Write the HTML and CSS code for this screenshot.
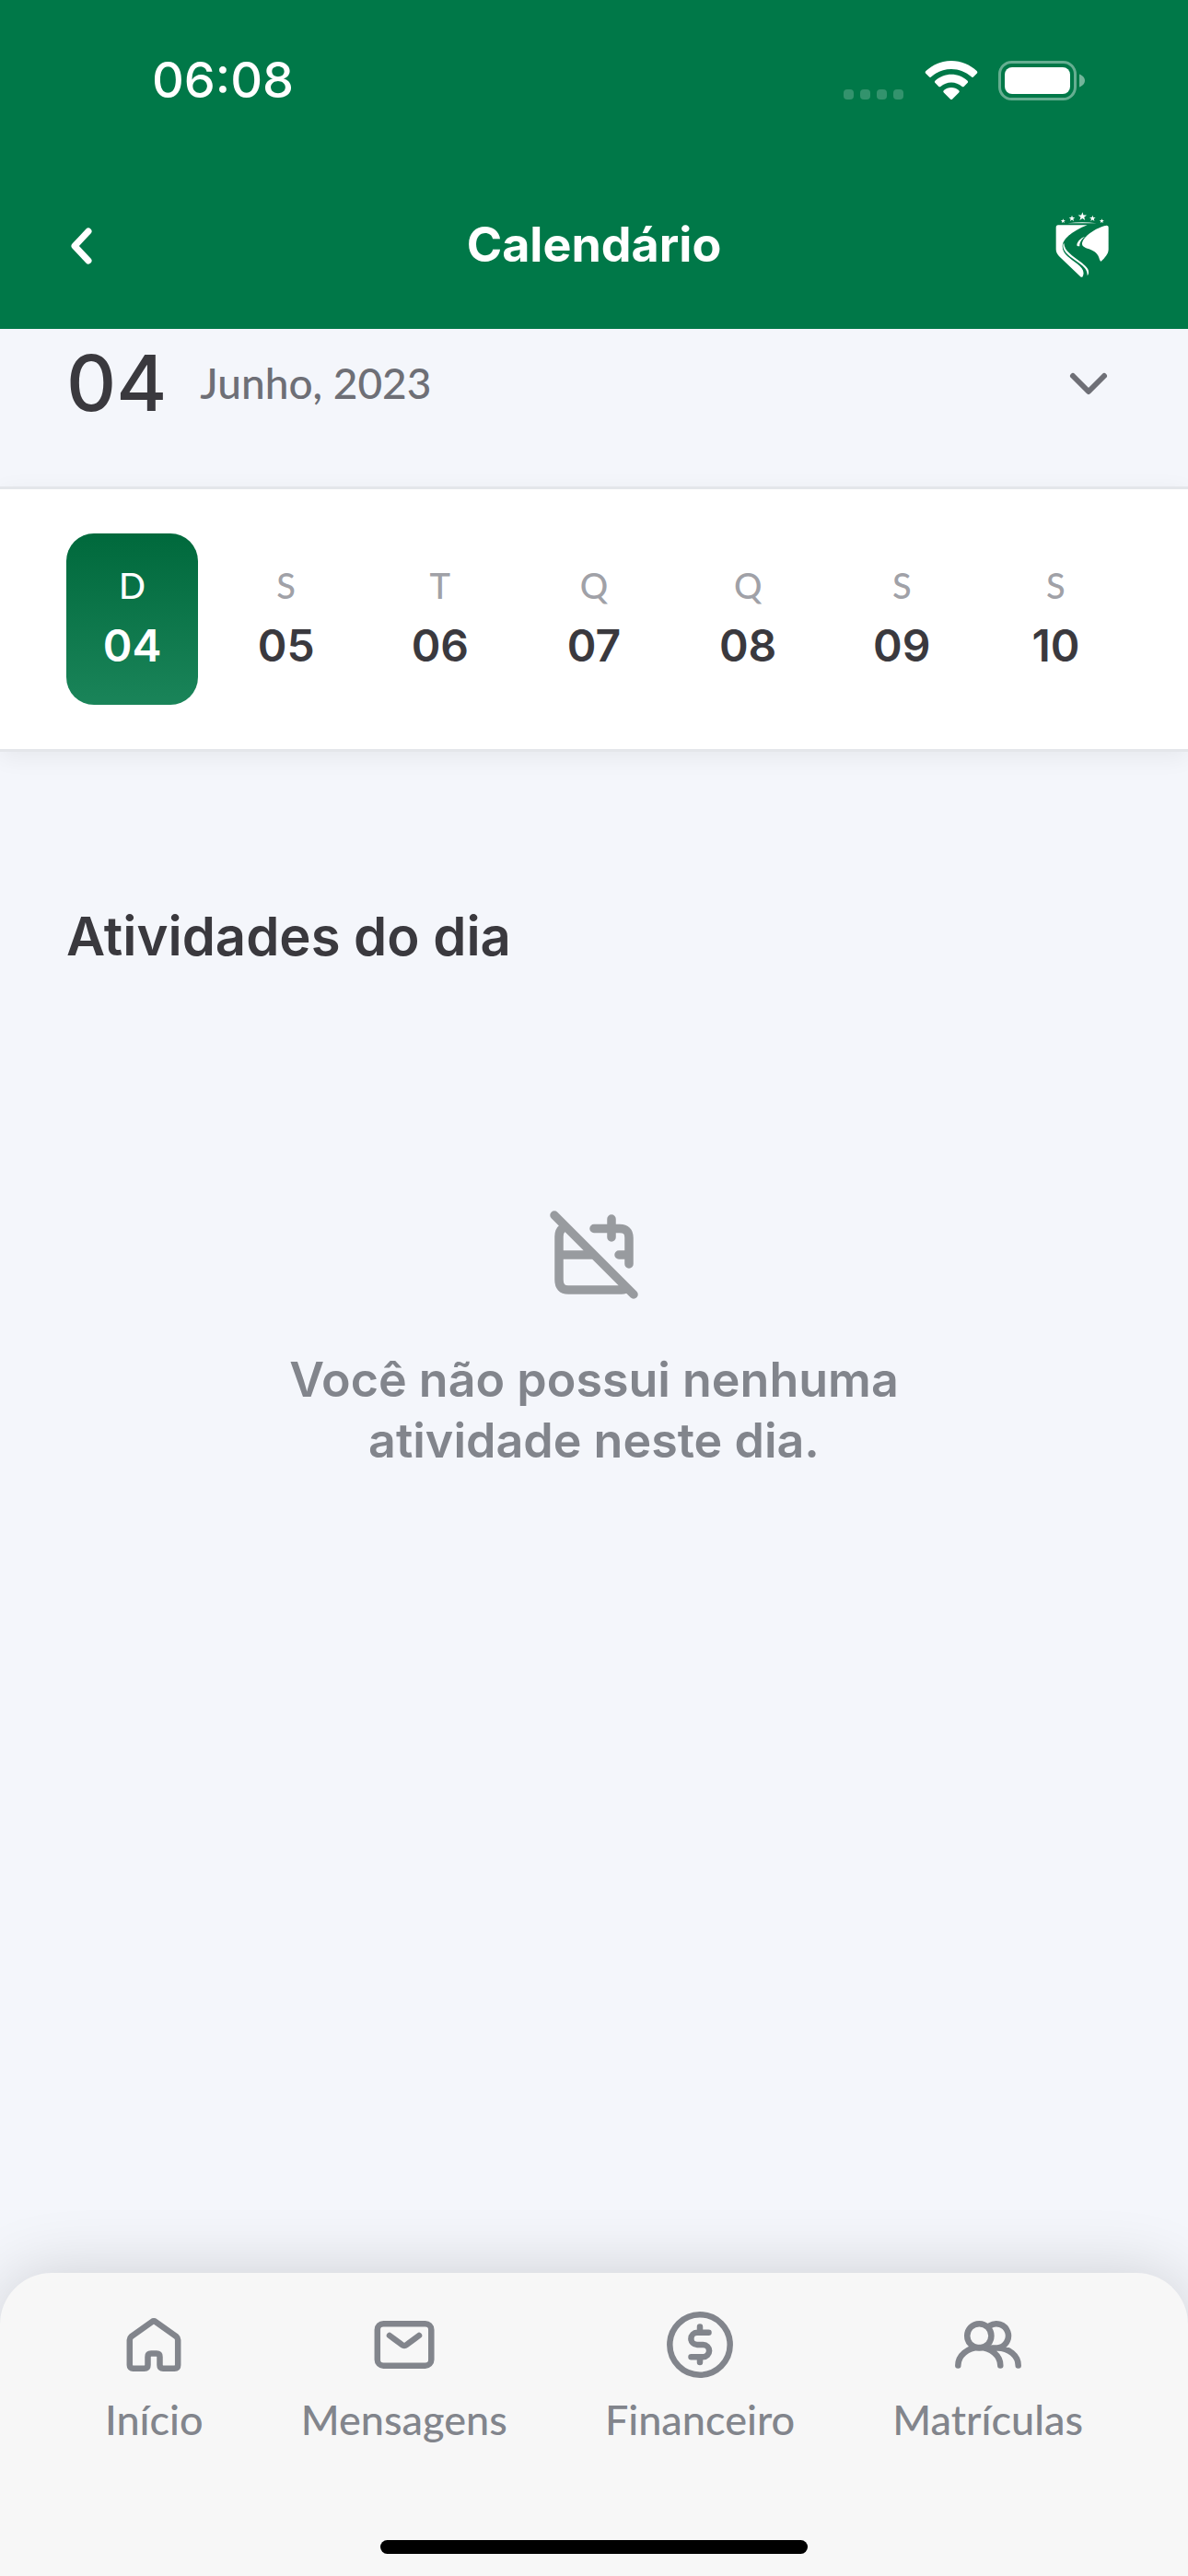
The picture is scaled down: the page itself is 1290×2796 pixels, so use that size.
FILE: index.html
```html
<!DOCTYPE html>
<html lang="pt-BR">
<head>
<meta charset="utf-8">
<meta name="viewport" content="width=device-width, initial-scale=1">
<title>Calendário</title>
<link rel="stylesheet" href="styles.css">
</head>
<body class="app">
<header class="header">
  <div class="status">
    <time class="status-time">06:08</time>
    <div class="status-icons">
      <svg width="66" height="43" viewBox="0 0 66 43" fill="#fff" opacity=".2" aria-hidden="true">
        <rect x="0" y="31" width="11" height="11" rx="4"/><rect x="18" y="31" width="11" height="11" rx="4"/><rect x="36" y="31" width="11" height="11" rx="4"/><rect x="54" y="31" width="11" height="11" rx="4"/>
      </svg>
      <svg width="58" height="43" viewBox="0 0 58 43" fill="#fff" aria-hidden="true">
        <path d="M29 0C39.700 0 49.400 4.200 56.600 11Q58 12.300 56.700 13.700L53.200 17.300Q52 18.500 50.700 17.300C44.900 12 37.300 8.900 29 8.900S13.100 12 7.300 17.300Q6 18.500 4.800 17.300L1.300 13.700Q0 12.300 1.400 11C8.600 4.200 18.300 0 29 0Z"/>
        <path d="M29 14.700c6.700 0 12.800 2.600 17.400 6.700q1.400 1.300.1 2.700l-3.600 3.600q-1.200 1.200-2.500.1C37.300 25.100 33.400 23.500 29 23.500s-8.300 1.600-11.400 4.300q-1.300 1.100-2.500-.1l-3.600-3.600q-1.300-1.400.1-2.700C16.200 17.300 22.300 14.700 29 14.700Z"/>
        <path d="M29 29c3.100 0 5.900 1.100 8.100 2.900q1.400 1.200.1 2.600l-7 6.900q-1.200 1.200-2.400 0l-7-6.900q-1.300-1.400.1-2.600C23.100 30.100 25.900 29 29 29Z"/>
      </svg>
      <svg width="94" height="43" viewBox="0 0 94 43" aria-hidden="true">
        <rect x="1.500" y="1.500" width="82" height="40" rx="13" fill="none" stroke="#fff" stroke-opacity=".4" stroke-width="3"/>
        <rect x="7" y="7" width="71" height="29" rx="8" fill="#fff"/>
        <path d="M88 14.500c3.500 1.300 6 4 6 7s-2.500 5.700-6 7z" fill="#fff" fill-opacity=".45"/>
      </svg>
    </div>
  </div>
  <div class="appbar">
    <button class="icon-button" type="button" aria-label="Voltar">
      <svg width="36" height="48" viewBox="0 0 36 48" fill="none" stroke="#fff" stroke-width="7" stroke-linecap="round" stroke-linejoin="round"><path d="M24 9 9 25l15 16"/></svg>
    </button>
    <h1 class="title">Calendário</h1>
    <svg class="crest" width="59" height="72" viewBox="106 64 177 216" fill="#fff" role="img" aria-label="Brasão">
      <path d="m194 65 3.500 9.500 10.500.3-8.300 6.300 3 10-8.700-6-8.700 6 3-10-8.300-6.300 10.500-.3zM160 75l2.500 7 7.500.2-6 4.600 2.200 7.200-6.200-4.200-6.200 4.200 2.200-7.200-6-4.600 7.500-.2zM227 75l2.500 7 7.500.2-6 4.600 2.200 7.200-6.200-4.200-6.200 4.200 2.200-7.200-6-4.600 7.500-.2zM131 86l1.800 5 5.700.2-4.500 3.400 1.600 5.400-4.600-3.200-4.600 3.200 1.600-5.400-4.500-3.400 5.700-.2zM257 86l1.800 5 5.700.2-4.500 3.400 1.600 5.400-4.600-3.200-4.600 3.200 1.600-5.400-4.500-3.400 5.700-.2z"/>
      <path d="M146 101q48-6 94 0zM115 107h95C165 125 129 150 129 176c0 27 27 40 48 57 18 15 26 27 17 43q-3 2-8-3l-66-63q-12-12-12-24v-71q0-8 7-8z"/>
      <path d="M134 166c1 26 29 41 53 60 17 13 30 24 27 38q-1 5-4 7c1-16-9-27-28-41-25-19-51-34-51-56 0-5 1-7 3-8zM202 144c-13 5-25 16-26 28q0 4 5 4h4c-1-13 7-23 17-32z"/>
      <path d="M273 108q6 0 6 6v72c0 15-13 28-24 39q-3 0-5-6c-5-18-15-27-34-34-15-5-23-10-23-17 0-22 47-55 80-60z"/>
    </svg>
  </div>
</header>

<main class="content">
  <div class="month">
    <span class="month-day">04</span>
    <span class="month-name">Junho, 2023</span>
    <button class="icon-button month-toggle" type="button" aria-label="Abrir calendário">
      <svg width="48" height="36" viewBox="0 0 48 36" fill="none" stroke="#6e6f76" stroke-width="6" stroke-linecap="round" stroke-linejoin="round"><path d="m7 10 17 17 17-17"/></svg>
    </button>
  </div>

  <div class="week" role="group" aria-label="Semana">
    <button class="day day-selected" type="button" aria-pressed="true"><span class="day-letter">D</span><span class="day-number">04</span></button>
    <button class="day" type="button"><span class="day-letter">S</span><span class="day-number">05</span></button>
    <button class="day" type="button"><span class="day-letter">T</span><span class="day-number">06</span></button>
    <button class="day" type="button"><span class="day-letter">Q</span><span class="day-number">07</span></button>
    <button class="day" type="button"><span class="day-letter">Q</span><span class="day-number">08</span></button>
    <button class="day" type="button"><span class="day-letter">S</span><span class="day-number">09</span></button>
    <button class="day" type="button"><span class="day-letter">S</span><span class="day-number">10</span></button>
  </div>

  <section class="activities">
    <h2 class="section-title">Atividades do dia</h2>
    <div class="empty">
      <svg width="96" height="96" viewBox="0 0 96 96" fill="none" stroke="#989b9f" stroke-width="9.500" stroke-linecap="round" stroke-linejoin="round" aria-hidden="true">
        <path d="m5 5 86 86M14 19q-4 3-4 9v47q0 11 10 11h58q4 0 6-2M10 48h36M48 19.500h28q10 0 10 10V58M67 9v20M75 48h11"/>
      </svg>
      <p class="empty-text">Você não possui nenhuma<br>atividade neste dia.</p>
    </div>
  </section>
</main>

<footer class="footer">
  <nav class="tabs" aria-label="Principal">
    <a class="tab" href="#inicio">
      <svg class="tab-icon" viewBox="0 0 72 72"><path d="M11.500 27.200 34 11.200q2-1.500 4 0l22.500 16q1.700 1.500 1.700 3.500V58q0 3.700-3.700 3.700H46.200q-3.700 0-3.700-3.700v-9q0-3.500-3.500-3.500h-6q-3.500 0-3.500 3.500v9q0 3.700-3.700 3.700H13.500q-3.700 0-3.700-3.700V30.700q0-2 1.700-3.500z"/></svg>
      <span>Início</span>
    </a>
    <a class="tab" href="#mensagens">
      <svg class="tab-icon" viewBox="0 0 72 72"><rect x="6.800" y="13.200" width="58.500" height="45.500" rx="6.500"/><path d="m20 26 13.500 10q2.500 2 5 0L52 26"/></svg>
      <span>Mensagens</span>
    </a>
    <a class="tab" href="#financeiro">
      <svg class="tab-icon" viewBox="0 0 72 72"><circle cx="36" cy="36" r="32.700"/><path d="M45.500 22.800H33a6.600 6.600 0 0 0 0 13.200h6.500a6.600 6.600 0 0 1 0 13.200h-13M36 16.500v6M36 49.500V55"/></svg>
      <span>Financeiro</span>
    </a>
    <a class="tab" href="#matriculas">
      <svg class="tab-icon" viewBox="0 0 72 72"><circle cx="26.300" cy="26.300" r="13.100"/><path d="M3.300 58.500a23 19.500 0 0 1 46 0M37.500 15.500a13.100 13.100 0 1 1 8.500 23.900h-6M46 39.500c12.500 0 22.700 8.500 22.700 19"/></svg>
      <span>Matrículas</span>
    </a>
  </nav>
  <div class="home-indicator"></div>
</footer>
</body>
</html>
```
FILE: styles.css
```css
* {
  box-sizing: border-box;
}

.app {
  display: flex;
  flex-direction: column;
  min-height: 100vh;
  margin: 0;
  background: #f4f6fb;
  color: #3a393e;
  font-family: Inter, "Liberation Sans", sans-serif;
}

.app svg {
  display: block;
  flex: none;
}

button {
  padding: 0;
  border: 0;
  background: none;
  color: inherit;
  font: inherit;
}

.header {
  background: #007848;
  color: #fff;
}

.status {
  display: flex;
  align-items: center;
  justify-content: space-between;
  height: 174px;
  padding: 0 112px 0 165px;
}

.status-time {
  font-size: 54px;
  font-weight: 500;
  line-height: 64px;
}

.status-icons {
  display: flex;
  gap: 22px;
}

.appbar {
  display: grid;
  grid-template-columns: 72px 1fr 72px;
  align-items: center;
  height: 183px;
  padding: 0 72px;
}

.title {
  margin: 0;
  font-size: 52px;
  font-weight: 700;
  line-height: 64px;
  text-align: center;
}

.crest {
  justify-self: start;
}

.month {
  display: flex;
  align-items: center;
  gap: 36px;
  height: 171px;
  padding: 2px 84px 56px 72px;
}

.month-day {
  font-size: 84px;
  font-weight: 500;
  line-height: 96px;
}

.month-name {
  color: #6e6f76;
  font-family: Lato, sans-serif;
  font-size: 46px;
  font-weight: 500;
  line-height: 64px;
}

.month-toggle {
  margin-left: auto;
}

.week {
  display: grid;
  grid-template-columns: repeat(7, 1fr);
  gap: 24px;
  padding: 48px 72px;
  border: solid #e4e6ea;
  border-width: 3px 0;
  background: #fff;
  box-shadow: 0 6px 24px rgb(0 0 0 / 6%);
}

.day {
  display: flex;
  flex-direction: column;
  align-items: center;
  justify-content: center;
  gap: 10px;
  height: 186px;
  border-radius: 30px;
}

.day-letter {
  color: #a0a1a7;
  font-family: Lato, sans-serif;
  font-size: 38px;
  font-weight: 500;
  line-height: 48px;
}

.day-number {
  font-size: 48px;
  font-weight: 600;
  line-height: 64px;
}

.day-selected {
  background: linear-gradient(#00693c, #1a8459);
  color: #fff;
}

.day-selected .day-letter {
  color: inherit;
}

.activities {
  padding: 168px 72px 72px;
}

.section-title {
  margin: 0;
  font-size: 58px;
  font-weight: 600;
  line-height: 64px;
}

.empty {
  display: flex;
  flex-direction: column;
  align-items: center;
  gap: 55px;
  margin-top: 266px;
}

.empty-text {
  margin: 0;
  color: #82858c;
  font-size: 52px;
  font-weight: 600;
  line-height: 66px;
  text-align: center;
}

.footer {
  margin-top: auto;
  padding: 42px 0 24px;
  border-radius: 56px 56px 0 0;
  background: #f7f7f7;
  box-shadow: 0 0 72px rgb(0 0 0 / 16%);
}

.tabs {
  display: flex;
  justify-content: space-between;
  padding: 0 114px;
}

.tab {
  display: flex;
  flex-direction: column;
  align-items: center;
  gap: 21px;
  color: #82858c;
  font-family: Lato, sans-serif;
  font-size: 45px;
  font-weight: 500;
  line-height: 48px;
  text-decoration: none;
}

.tab-icon {
  width: 72px;
  height: 72px;
  fill: none;
  stroke: currentColor;
  stroke-width: 6.5px;
  stroke-linecap: round;
  stroke-linejoin: round;
}

.home-indicator {
  width: 36%;
  height: 15px;
  margin: 107px auto 0;
  border-radius: 8px;
  background: #000;
}
```
